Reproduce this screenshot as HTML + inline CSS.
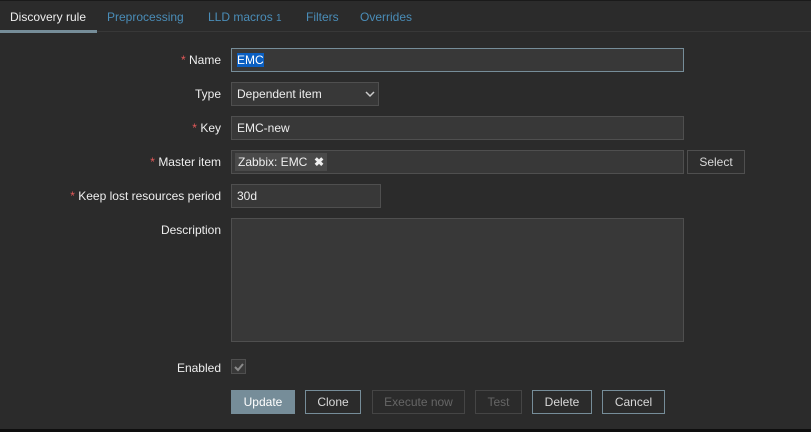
<!DOCTYPE html>
<html><head><style>
body{margin:0;width:811px;height:432px;background:#2b2b2b;font-family:"Liberation Sans",Arial,sans-serif;font-size:12px;color:#eeeeee;position:relative;overflow:hidden}
.a{position:absolute}
.tab{top:10px;color:#4a8db8}
.lbl{right:590px;text-align:right;white-space:nowrap}
.req{color:#e45959}
.in{background:#383838;border:1px solid #4f4f4f;box-sizing:border-box;height:24px;line-height:22px;padding-left:5px}
.btn{box-sizing:border-box;height:24px;line-height:22px;text-align:center;border:1px solid #768d99;color:#d8d8d8;top:390px}
.dis{border-color:#454545;color:#666}
</style></head><body>
<div class="a" style="left:0;top:0;width:811px;height:1px;background:#1a1a1a"></div>
<div class="a tab" style="left:10px;color:#eeeeee">Discovery rule</div>
<div class="a tab" style="left:107px">Preprocessing</div>
<div class="a tab" style="left:208px">LLD macros <span style="font-size:10px">1</span></div>
<div class="a tab" style="left:306px">Filters</div>
<div class="a tab" style="left:360px">Overrides</div>
<div class="a" style="left:0;top:31px;width:811px;height:1px;background:#383838"></div>
<div class="a" style="left:0;top:30px;width:97px;height:3px;background:#768d99"></div>

<div class="a lbl" style="top:53px"><span class="req">* </span>Name</div>
<div class="a in" style="left:231px;top:48px;width:453px;border-color:#768d99"><span style="background:#0b5fc1;color:#fff">EMC</span></div>
<div class="a lbl" style="top:87px">Type</div>
<div class="a in" style="left:231px;top:82px;width:148px">Dependent item<svg class="a" style="left:133px;top:8px" width="10" height="7"><path d="M1 1L5 5L9 1" stroke="#ccc" stroke-width="1.5" fill="none"/></svg></div>
<div class="a lbl" style="top:121px"><span class="req">* </span>Key</div>
<div class="a in" style="left:231px;top:116px;width:453px">EMC-new</div>
<div class="a lbl" style="top:155px"><span class="req">* </span>Master item</div>
<div class="a in" style="left:231px;top:150px;width:453px;padding-left:3px"><span style="display:inline-block;background:#4a4a4a;height:18px;line-height:18px;padding:0 3px;margin-top:2px;vertical-align:top">Zabbix: EMC &nbsp;<b>✖</b></span></div>
<div class="a btn" style="left:687px;top:150px;width:58px;border-color:#4f4f4f;background:#2e2e2e">Select</div>
<div class="a lbl" style="top:189px"><span class="req">* </span>Keep lost resources period</div>
<div class="a in" style="left:231px;top:184px;width:150px">30d</div>
<div class="a lbl" style="top:223px">Description</div>
<div class="a in" style="left:231px;top:218px;width:453px;height:124px"></div>
<div class="a lbl" style="top:361px">Enabled</div>
<div class="a" style="left:231px;top:359px;width:15px;height:15px;box-sizing:border-box;border:1px solid #4f4f4f;background:#383838"><svg class="a" style="left:2px;top:2px" width="10" height="10"><path d="M1 5L4 8L9 2" stroke="#8a8a8a" stroke-width="2" fill="none"/></svg></div>

<div class="a btn" style="left:231px;width:64px;background:#768d99;color:#fff">Update</div>
<div class="a btn" style="left:305px;width:56px">Clone</div>
<div class="a btn dis" style="left:372px;width:93px">Execute now</div>
<div class="a btn dis" style="left:475px;width:47px">Test</div>
<div class="a btn" style="left:532px;width:60px">Delete</div>
<div class="a btn" style="left:602px;width:63px">Cancel</div>
<div class="a" style="left:0;top:429px;width:811px;height:3px;background:#0e0e0e"></div>
</body></html>
